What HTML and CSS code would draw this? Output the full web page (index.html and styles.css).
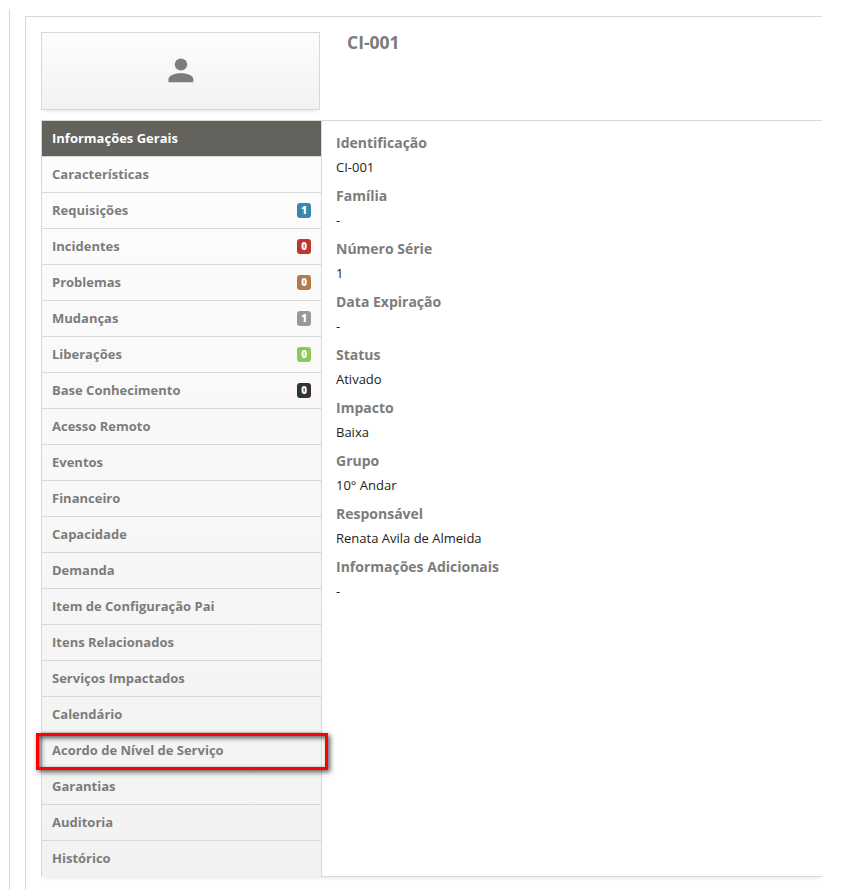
FILE: index.html
```html
<!DOCTYPE html>
<html lang="pt-BR">
<head>
<meta charset="utf-8">
<title>CI-001</title>
<link rel="stylesheet" href="styles.css">
</head>
<body>
<main class="page">
  <section class="panel">
    <header class="head">
      <div class="avatar">
        <svg width="26" height="25" viewBox="0 0 26 25"><ellipse cx="13" cy="6.5" rx="6.2" ry="6"/><path d="M.5 24.3v-3C.5 17.700 6 15.300 13 15.300s12.300 2.400 12.300 6v3z"/></svg>
      </div>
      <h1 class="title">CI-001</h1>
    </header>
    <div class="body">
      <nav class="menu">
        <a class="item active">Informações Gerais</a>
        <a class="item">Características</a>
        <a class="item">Requisições<span class="badge blue">1</span></a>
        <a class="item">Incidentes<span class="badge red">0</span></a>
        <a class="item">Problemas<span class="badge brown">0</span></a>
        <a class="item">Mudanças<span class="badge gray">1</span></a>
        <a class="item">Liberações<span class="badge green">0</span></a>
        <a class="item">Base Conhecimento<span class="badge black">0</span></a>
        <a class="item">Acesso Remoto</a>
        <a class="item">Eventos</a>
        <a class="item">Financeiro</a>
        <a class="item">Capacidade</a>
        <a class="item">Demanda</a>
        <a class="item">Item de Configuração Pai</a>
        <a class="item">Itens Relacionados</a>
        <a class="item">Serviços Impactados</a>
        <a class="item">Calendário</a>
        <a class="item marked">Acordo de Nível de Serviço</a>
        <a class="item">Garantias</a>
        <a class="item">Auditoria</a>
        <a class="item">Histórico</a>
      </nav>
      <dl class="details">
        <dt>Identificação</dt><dd>CI-001</dd>
        <dt>Família</dt><dd>-</dd>
        <dt>Número Série</dt><dd>1</dd>
        <dt>Data Expiração</dt><dd>-</dd>
        <dt>Status</dt><dd>Ativado</dd>
        <dt>Impacto</dt><dd>Baixa</dd>
        <dt>Grupo</dt><dd>10° Andar</dd>
        <dt>Responsável</dt><dd>Renata Avila de Almeida</dd>
        <dt>Informações Adicionais</dt><dd>-</dd>
      </dl>
    </div>
  </section>
</main>
</body>
</html>
```
FILE: styles.css
```css
*, *::after { box-sizing: border-box; }
body {
  margin: 0;
  background: #fff;
  color: #222;
  font: 13px/20px "Open Sans", sans-serif;
}
.page {
  width: 813px;
  height: 881px;
  margin: 9px 0 0 9px;
  padding: 7px 0 0 15px;
  border-left: 1px solid #d8d8d8;
  overflow: hidden;
}
.panel {
  height: 874px;
  padding: 15px 0 0 15px;
  border: solid #d8d8d8;
  border-width: 1px 0 0 1px;
}
.head { display: flex; height: 88px; }
.avatar {
  display: flex;
  justify-content: center;
  width: 279px;
  height: 78px;
  padding-top: 25px;
  border: 1px solid #d8d8d8;
  background: linear-gradient(#fdfdfd, #f2f2f2);
  box-shadow: 0 5px 3px -3px #eee;
}
.avatar svg { fill: #7c7c7c; }
.title {
  margin: 0 0 0 27px;
  color: #7c7c7c;
  font-size: 17.5px;
  line-height: 20px;
  font-weight: 700;
}
.body {
  display: flex;
  height: 757px;
  border: solid #d8d8d8;
  border-width: 1px 0;
  box-shadow: 0 5px 3px -3px #eee;
}
.menu {
  width: 281px;
  height: 756px;
  border: solid #d8d8d8;
  border-width: 0 1px;
  background: linear-gradient(#fdfdfd, #f2f2f2);
}
.item {
  display: flex;
  position: relative;
  align-items: flex-start;
  justify-content: space-between;
  height: 36px;
  padding: 7px 10px 0;
  border-bottom: 1px solid #d8d8d8;
  color: #7c7c7c;
  font-weight: 700;
}
.item:last-child { border-bottom-color: #f2f2f2; }
.item.active { background: #63625d; color: #fff; }
.badge {
  width: 14px;
  height: 15px;
  margin-top: 3px;
  border-radius: 3px;
  color: #fff;
  font-size: 9.75px;
  line-height: 15px;
  font-weight: 800;
  text-align: center;
}
.blue { background: #3a87ad; }
.red { background: #bd362f; }
.brown { background: #b07c4b; }
.gray { background: #999; }
.green { background: #8fc75a; }
.black { background: #333; }
.marked::after {
  content: "";
  position: absolute;
  z-index: 1;
  top: 0;
  left: -6px;
  width: 292px;
  height: 37px;
  border: 3px solid #f00;
  box-shadow: 2px 2px 5px rgba(0, 0, 0, .65), inset 2px 2px 5px rgba(0, 0, 0, .65);
}
.details { margin: 0; padding: 12px 0 0 14px; }
.details dt {
  height: 24px;
  color: #7c7c7c;
  font-size: 14px;
  font-weight: 700;
}
.details dd { height: 29px; margin: 0; }
```
